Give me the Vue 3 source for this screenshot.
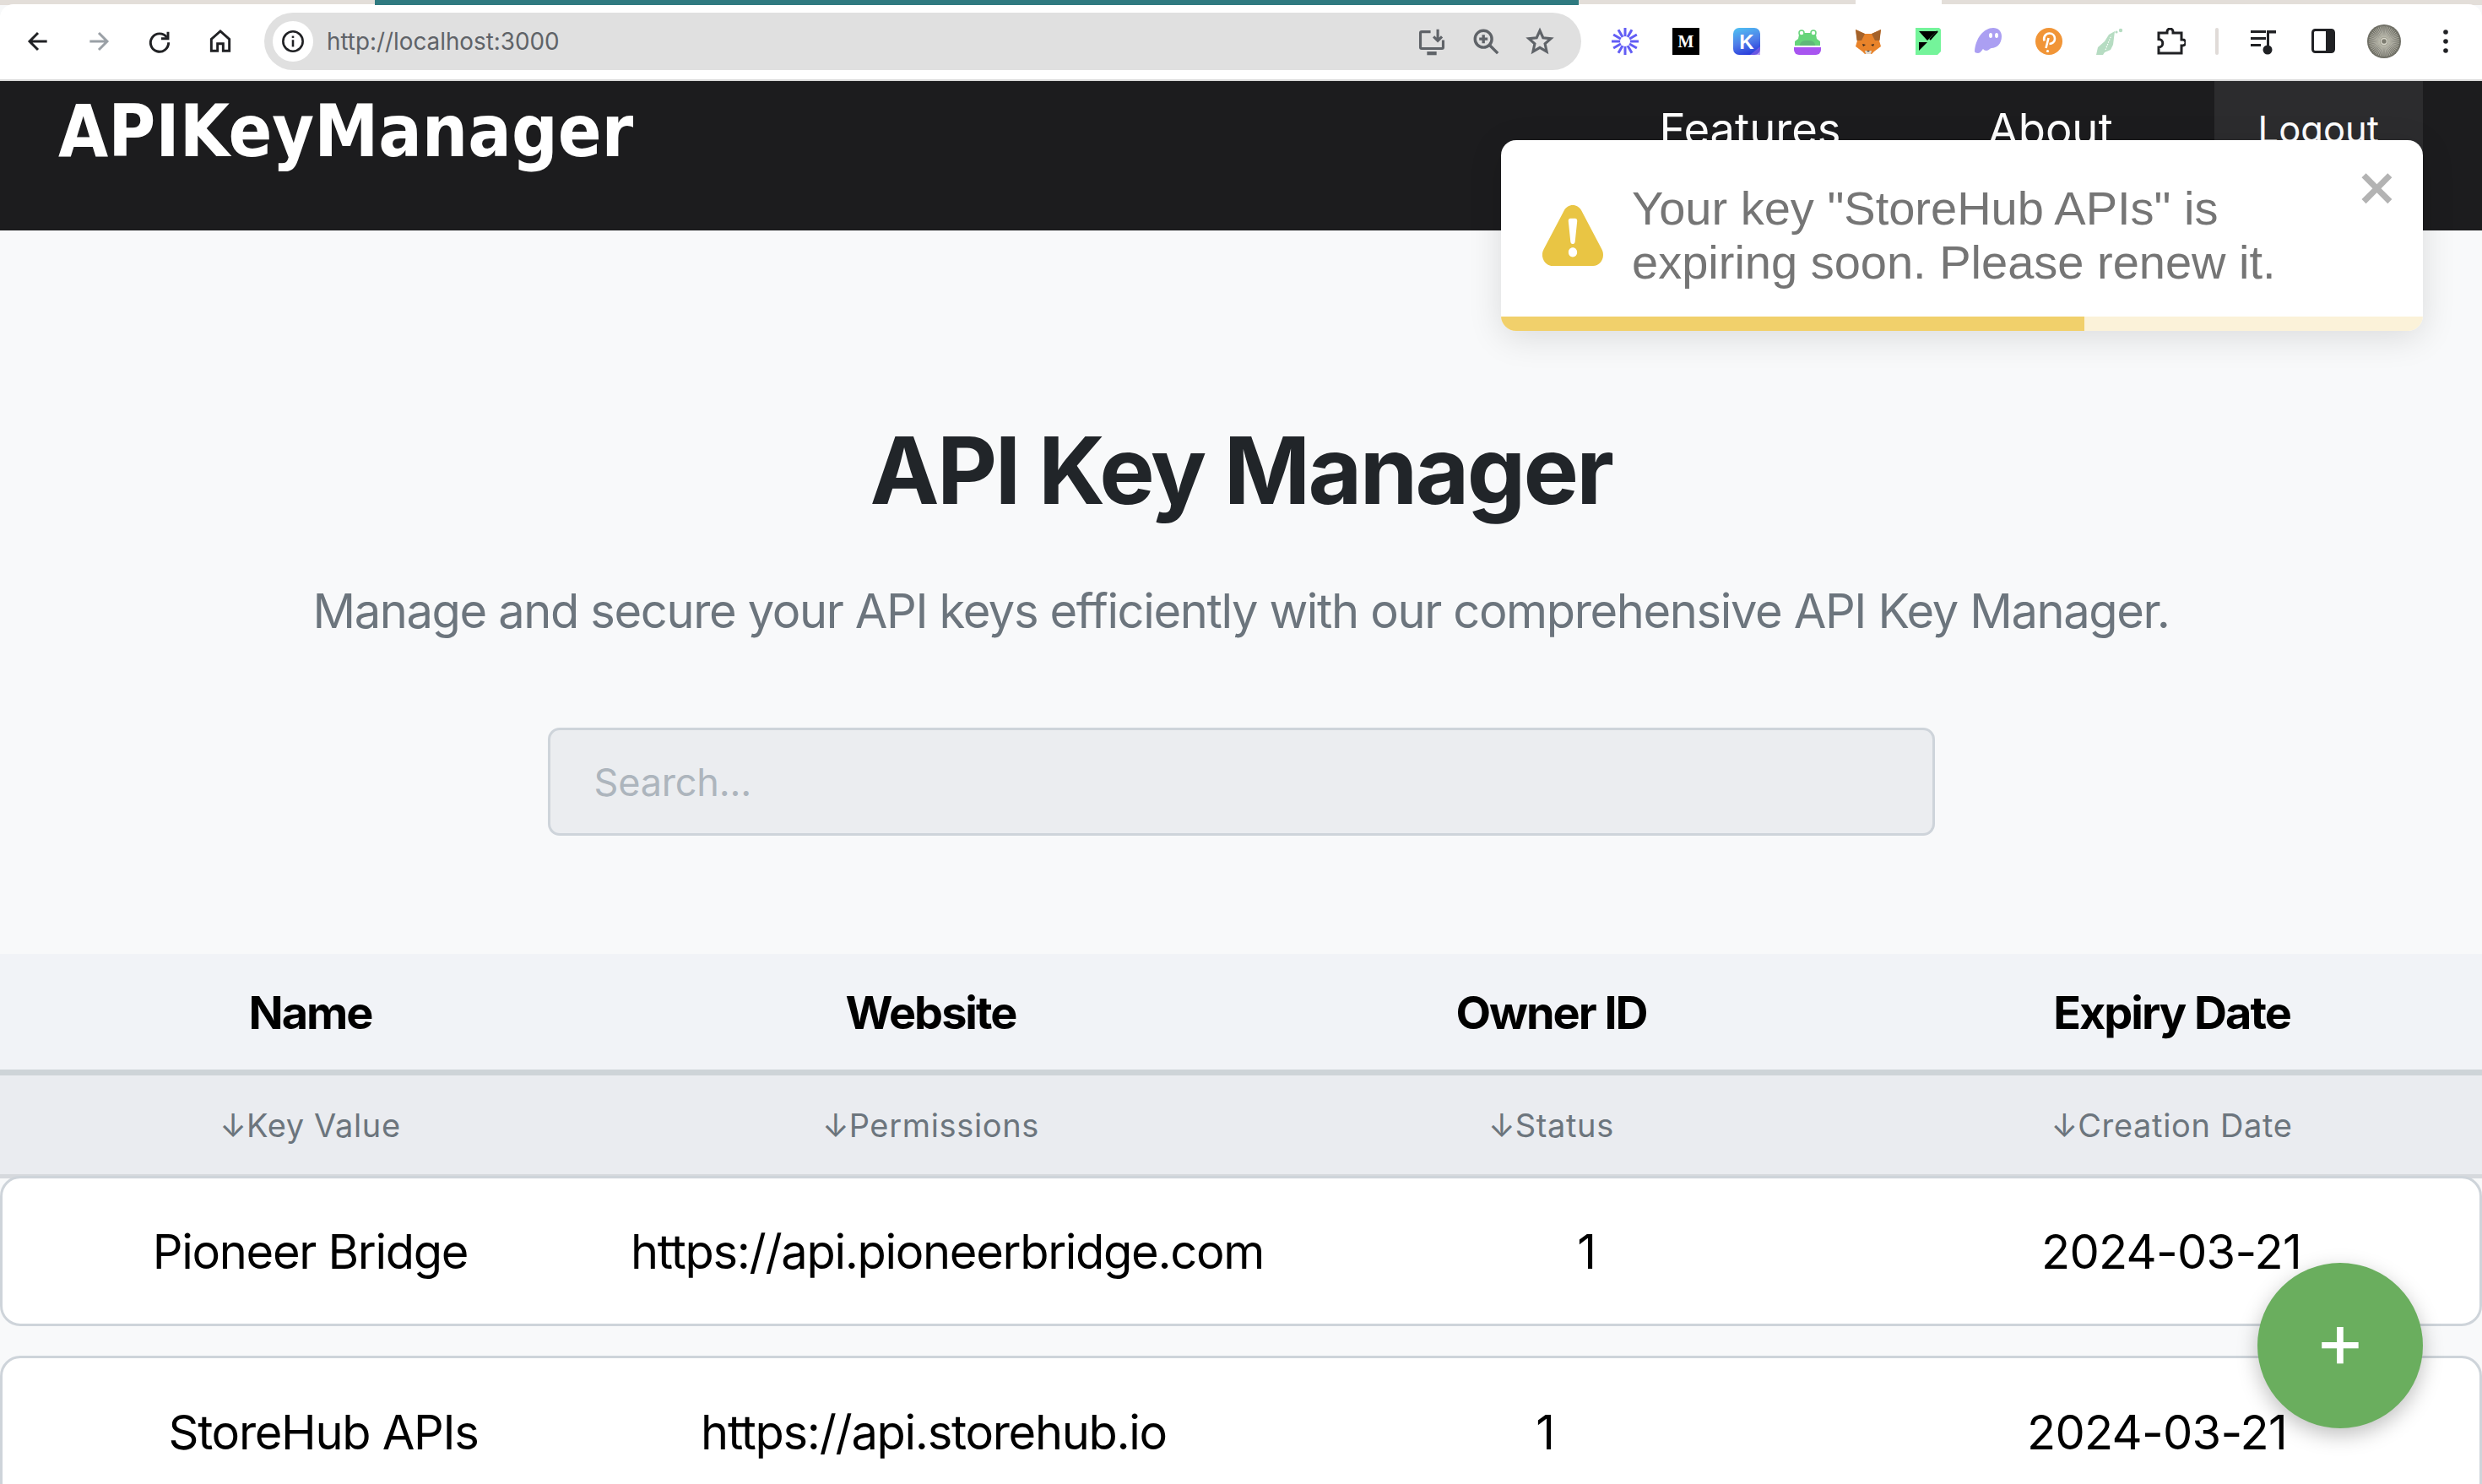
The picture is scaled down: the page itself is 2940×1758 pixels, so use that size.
<script setup>
const spokes = Array.from({ length: 6 }, (_, i) => i * 30)
const rays = Array.from({ length: 48 }, (_, i) => i * 7.5)
const columns = ['Name', 'Website', 'Owner ID', 'Expiry Date']
const subColumns = ['Key Value', 'Permissions', 'Status', 'Creation Date']
const rows = [
  { id: 'a', cells: ['Pioneer Bridge', 'https://api.pioneerbridge.com', '1', '2024-03-21'] },
  { id: 'b', cells: ['StoreHub APIs', 'https://api.storehub.io', '1', '2024-03-21'] }
]
</script>

<template>
  <div class="page">
    <div class="tabstrip">
      <div class="tab-gap"></div>
      <div class="tab-active"></div>
      <div class="tab-rest"></div>
      <div class="tab-notch"></div>
      <div class="tab-fill"></div>
    </div>

    <div class="toolbar">
      <div class="navbtns">
        <svg class="navicon" viewBox="0 0 24 24" fill="none" stroke="#202124" stroke-width="2.2"><path d="M20 12H5M12 4.5 4.5 12l7.5 7.5" /></svg>
        <svg class="navicon" viewBox="0 0 24 24" fill="none" stroke="#9aa0a6" stroke-width="2.2"><path d="M4 12h15M12 4.5l7.5 7.5-7.5 7.5" /></svg>
        <svg class="navicon" viewBox="0 0 24 24" fill="none" stroke="#202124" stroke-width="2.2"><path d="M18.5 8.5A8 8 0 1 0 20 13" /><path d="M19.5 3.5v6h-6" /></svg>
        <svg class="navicon" viewBox="0 0 24 24" fill="none" stroke="#202124" stroke-width="2.2"><path d="M4 20.5V10l8-7 8 7v10.5h-5.5V14h-5v6.5z" /></svg>
      </div>

      <div class="omnibox">
        <div class="chip">
          <svg class="info" viewBox="0 0 24 24" fill="none" stroke="#202124" stroke-width="2.2"><circle cx="12" cy="12" r="10" /><path d="M12 10.5v7" /><path d="M12 6.5v2" /></svg>
        </div>
        <span class="url">http://localhost:3000</span>
        <div class="omni-actions">
          <svg class="omni-icon" viewBox="0 0 24 24" fill="none" stroke="#5f6368" stroke-width="2.2"><path d="M11 4H3.500a1 1 0 0 0-1 1v12a1 1 0 0 0 1 1h17a1 1 0 0 0 1-1v-6" /><path d="M8 22h8" stroke-width="3" /><path d="M17 2v9M13.500 8l3.500 3.500L20.500 8" /></svg>
          <svg class="omni-icon" viewBox="0 0 24 24" fill="none" stroke="#5f6368" stroke-width="2.4"><circle cx="10" cy="10" r="7" /><path d="m15 15 7 7M10 6.500v7M6.500 10h7" /></svg>
          <svg class="omni-icon" viewBox="0 0 24 24" fill="none" stroke="#5f6368" stroke-width="2.2"><path d="m12 3 2.700 6 6.500.7-4.900 4.300 1.400 6.500L12 17.200 6.300 20.500l1.400-6.500L2.800 9.700l6.500-.7z" /></svg>
        </div>
      </div>

      <div class="extensions">
        <svg class="ext" viewBox="0 0 32 32">
          <g stroke="#625df5" stroke-width="3">
            <line v-for="a in spokes" :key="a" x1="16" y1="0" x2="16" y2="32" :transform="`rotate(${a} 16 16)`" />
          </g>
          <circle cx="16" cy="16" r="6" fill="#fff" />
        </svg>
        <svg class="ext" viewBox="0 0 32 32">
          <rect width="32" height="32" fill="#000" />
          <text x="16" y="23" text-anchor="middle" class="ext-m">M</text>
        </svg>
        <svg class="ext" viewBox="0 0 32 32">
          <defs>
            <linearGradient id="kgrad" x1="0.2" y1="0" x2="0.5" y2="1">
              <stop offset="0" stop-color="#4fbdf2" />
              <stop offset="0.55" stop-color="#4f7de8" />
              <stop offset="1" stop-color="#2b3fdc" />
            </linearGradient>
          </defs>
          <rect width="32" height="32" rx="7" fill="url(#kgrad)" />
          <path d="M20 32h12V22z" fill="#9268e8" opacity=".6" />
          <text x="16" y="25" text-anchor="middle" class="ext-k">K</text>
        </svg>
        <svg class="ext" viewBox="0 0 32 32">
          <path d="M1 21v-5l4-3 1-5a3.500 3.500 0 0 1 5-2h10a3.500 3.500 0 0 1 5 2l1 5 4 3v5z" fill="#66d47a" />
          <path d="M7 21c0-5 4-6 9-6s9 1 9 6z" fill="#5fb878" />
          <circle cx="9" cy="6" r="3" fill="#fff" stroke="#66d47a" stroke-width="1.500" />
          <circle cx="23" cy="6" r="3" fill="#fff" stroke="#66d47a" stroke-width="1.500" />
          <path d="M0 23h32v3a6 6 0 0 1-6 6H6a6 6 0 0 1-6-6z" fill="#a855f0" />
        </svg>
        <svg class="ext" viewBox="0 0 32 32">
          <path d="M1 2l11 5h8l11-5-2 13 2 7-8 6-3 3h-8l-3-3-8-6 2-7z" fill="#e8832a" />
          <path d="M1 2l11 5-4 8H2.500zM31 2l-11 5 4 8h5.500z" fill="#a4622a" />
          <path d="M12 27h8l-1 4h-6z" fill="#e0d8cc" />
          <path d="M14 27h4l-2 1.500z" fill="#3a3a3a" />
          <path d="M9 19l4 1-3 2zM23 19l-4 1 3 2z" fill="#3b2a1e" />
        </svg>
        <svg class="ext ext-narrow" viewBox="0 0 30 32">
          <path d="M0 0h28l2 2v26l-4 4H0z" fill="#74f49a" />
          <path d="M4 4h21l-11 11z" fill="#000" />
          <path d="M26 4 17 14" stroke="#000" stroke-width="2" />
          <path d="M4 27V17h10z" fill="#000" />
        </svg>
        <svg class="ext" viewBox="0 0 32 32">
          <path d="M0 28C1 12 11 0 22 0c6 0 10 4 10 10 0 9-6 14-12 14-2 0-3 3-6 3-2 0-3-1-4-2-2 2-3 5-6 5-2 0-4-1-4-2z" fill="#ab9ff2" />
          <ellipse cx="19" cy="9" rx="2" ry="3" fill="#fff" />
          <ellipse cx="26" cy="9" rx="2" ry="3" fill="#fff" />
        </svg>
        <svg class="ext" viewBox="0 0 32 32">
          <circle cx="16" cy="16" r="16" fill="#f19537" />
          <path d="M10.500 15.500C9 10.500 12.500 6.500 16.500 6.500S23 9.500 23 13s-3 6-6.500 6M15.500 12l-3 12" fill="none" stroke="#fff" stroke-width="2.600" />
          <circle cx="14.500" cy="27.500" r="1.600" fill="#fff" />
        </svg>
        <svg class="ext" viewBox="0 0 32 32">
          <g fill="#b6dcc2">
            <path d="M0 32l2-9 8-7 5-8 7-4-1 8-1 8-3 6-7 3-2 3z" />
            <circle cx="29" cy="3" r="2.200" />
            <circle cx="24" cy="5" r="1.600" />
          </g>
          <path d="M11 26l4-10 3-7" stroke="#fff" stroke-width="1.200" stroke-dasharray="1.500 1.500" fill="none" />
        </svg>
        <svg class="ext puzzle" viewBox="0 0 34 32" fill="none" stroke="#202124" stroke-width="3">
          <path d="M2 6h10V4.500a3.500 3.500 0 0 1 7 0V6h10v8h1.500a3.500 3.500 0 0 1 0 7H29v9H2v-7a4.500 4.500 0 0 0 0-9.500z" />
        </svg>
      </div>

      <div class="sep"></div>

      <div class="tools">
        <svg class="tool-music" viewBox="0 0 30 32">
          <g fill="#202124">
            <rect y="3" width="18" height="3" />
            <rect y="11" width="18" height="3" />
            <rect y="19" width="12" height="3" />
            <rect x="19" y="3" width="11" height="3.500" />
            <rect x="19" y="3" width="3" height="24" />
            <circle cx="20" cy="26" r="5.500" />
          </g>
        </svg>
        <svg class="tool-panel" viewBox="0 0 28 32">
          <rect x="1.500" y="2.500" width="25" height="26" rx="3" fill="#fff" stroke="#202124" stroke-width="3" />
          <rect x="17" y="2.500" width="10" height="26" fill="#202124" />
        </svg>
        <svg class="avatar" viewBox="0 0 40 40">
          <defs>
            <radialGradient id="avg" cx="0.5" cy="0.5" r="0.55">
              <stop offset="0" stop-color="#a8a798" />
              <stop offset="0.5" stop-color="#83827a" />
              <stop offset="1" stop-color="#68685e" />
            </radialGradient>
          </defs>
          <circle cx="20" cy="20" r="20" fill="url(#avg)" />
          <g stroke="#d3d2c4" stroke-width=".7" opacity=".75">
            <line v-for="a in rays" :key="a" x1="20" y1="15" x2="20" y2="2" :transform="`rotate(${a} 20 20)`" />
          </g>
          <circle cx="20" cy="20" r="3.500" fill="#7c7b70" stroke="#dad9cc" stroke-width="1.400" />
        </svg>
      </div>

      <svg class="dots" viewBox="0 0 6 28" fill="#202124">
        <circle cx="3" cy="3" r="2.800" />
        <circle cx="3" cy="14" r="2.800" />
        <circle cx="3" cy="25" r="2.800" />
      </svg>
    </div>

    <header class="navbar">
      <div class="brand">APIKeyManager</div>
      <nav class="links">
        <a class="link">Features</a>
        <a class="link">About</a>
        <a class="link link-active">Logout</a>
      </nav>
    </header>

    <section class="hero">
      <h1 class="title">API Key Manager</h1>
      <p class="subtitle">Manage and secure your API keys efficiently with our comprehensive API Key Manager.</p>
      <input class="search" type="text" placeholder="Search..." />
    </section>

    <div class="thead">
      <div v-for="c in columns" :key="c" class="th">{{ c }}</div>
    </div>
    <div class="subhead">
      <div v-for="c in subColumns" :key="c" class="sh"><span class="arrow">↓</span>{{ c }}</div>
    </div>

    <div v-for="r in rows" :key="r.id" class="card" :class="`card-${r.id}`">
      <div v-for="(cell, i) in r.cells" :key="i" class="cell" :class="{ 'cell-date': i === 3 }">{{ cell }}</div>
    </div>

    <div class="toast">
      <div class="toast-body">
        <svg class="warn" viewBox="0 0 24 24" fill="#e9c544"><path d="M23.32 17.191L15.438 2.184C14.728.833 13.416 0 11.996 0c-1.42 0-2.733.833-3.443 2.184L.533 17.448a4.744 4.744 0 000 4.368C1.243 23.167 2.555 24 3.975 24h16.05C22.22 24 24 22.044 24 19.632c0-.904-.251-1.746-.68-2.44zm-9.622 1.46c0 1.033-.724 1.823-1.698 1.823s-1.698-.79-1.698-1.822v-.043c0-1.028.724-1.822 1.698-1.822s1.698.79 1.698 1.822v.043zm.039-12.285l-.84 8.06c-.057.581-.408.943-.897.943-.49 0-.84-.367-.896-.942l-.84-8.065c-.057-.624.25-1.095.779-1.095h1.91c.528.005.84.476.784 1.1z" /></svg>
        <div class="toast-text">Your key "StoreHub APIs" is<br />expiring soon. Please renew it.</div>
        <svg class="toast-close" viewBox="0 0 14 16" fill="#b3b3b3"><path d="M7.71 8.23l-3.75 3.75-1.48-1.48 3.75-3.75L2.48 3 3.96 1.52l3.75 3.75L11.46 1.52 12.94 3 9.19 6.75l3.75 3.75-1.48 1.48z" /></svg>
      </div>
      <div class="progress"><div class="progress-fill"></div></div>
    </div>

    <button class="fab">+</button>
  </div>
</template>

<style>
html, body { margin: 0; padding: 0; background: #fff; }
</style>

<style scoped>
.page {
  position: relative;
  width: 2940px;
  height: 1758px;
  overflow: hidden;
  background: #f8f9fa;
  font-family: Inter, "Noto Sans", sans-serif;
}

.tabstrip { display: flex; height: 6px; background: #e3ded9; }
.tab-gap { width: 444px; }
.tab-active { width: 1426px; background: #2f7a80; }
.tab-rest { width: 328px; }
.tab-notch { width: 102px; background: #fff; }
.tab-fill { flex: 1; }

.toolbar {
  display: flex;
  align-items: center;
  height: 91px;
  background: #fff;
  border-top-left-radius: 16px;
  border-top-right-radius: 16px;
  margin-top: -1px;
  padding-bottom: 1px;
  box-sizing: border-box;
  border-bottom: 2px solid #d8d8d8;
}
.navbtns { display: flex; gap: 40px; padding-left: 29px; }
.navicon { width: 32px; height: 32px; display: block; }
.omnibox {
  display: flex;
  align-items: center;
  width: 1560px;
  height: 68px;
  margin-left: 36px;
  border-radius: 34px;
  background: #e0e0e0;
  box-sizing: border-box;
  padding-left: 10px;
  padding-right: 32px;
}
.chip {
  display: flex;
  align-items: center;
  justify-content: center;
  width: 48px;
  height: 48px;
  border-radius: 50%;
  background: #fff;
}
.info { width: 28px; height: 28px; }
.url {
  margin-left: 16px;
  font-family: Inter, sans-serif;
  font-size: 27.800px;
  color: #5f6368;
}
.omni-actions { display: flex; gap: 30px; margin-left: auto; }
.omni-icon { width: 34px; height: 34px; display: block; }

.extensions { display: flex; gap: 40px; margin-left: 36px; align-items: center; }
.ext { width: 32px; height: 32px; display: block; }
.ext-narrow { width: 30px; }
.puzzle { width: 34px; height: 32px; }
.ext-m { font: 700 20px "Liberation Serif", serif; fill: #fff; }
.ext-k { font: 700 24px "Liberation Sans", sans-serif; fill: #fff; }

.sep { width: 4px; height: 32px; margin-left: 35px; background: #e0dbd8; border-radius: 2px; }
.tools { display: flex; align-items: center; margin-left: 38px; gap: 42px; }
.tool-music { width: 30px; height: 32px; display: block; }
.tool-panel { width: 28px; height: 32px; display: block; }
.avatar { width: 40px; height: 40px; display: block; margin-left: -4px; }
.dots { width: 6px; height: 28px; margin-left: 50px; }

.navbar {
  display: flex;
  justify-content: space-between;
  align-items: flex-start;
  height: 177px;
  background: #1c1c1e;
  padding: 0 70px 0 69px;
  box-sizing: border-box;
}
.brand {
  font-family: "DejaVu Sans Condensed", "DejaVu Sans", sans-serif;
  font-stretch: condensed;
  font-weight: 700;
  font-size: 85px;
  line-height: 100px;
  color: #fff;
  margin-top: 10px;
}
.links { display: flex; gap: 66px; }
.link {
  padding: 21px 54px 0;
  height: 130px;
  box-sizing: border-box;
  font-size: 52.500px;
  line-height: 72px;
  color: #fff;
  border-radius: 0 0 16px 16px;
}
.link-active {
  padding-left: 52px;
  padding-right: 52px;
  background: #2c2c2e;
  font-size: 43.500px;
}

.hero {
  display: flex;
  flex-direction: column;
  align-items: center;
  height: 857px;
  box-sizing: border-box;
  padding-top: 224px;
}
.title {
  margin: 0;
  font-size: 110px;
  line-height: 120px;
  font-weight: 700;
  letter-spacing: -2.700px;
  color: #212529;
}
.subtitle {
  margin: 72px 0 0;
  font-size: 56px;
  line-height: 70px;
  letter-spacing: -1.360px;
  color: #6c757d;
}
.search {
  display: block;
  width: 1643px;
  height: 128px;
  margin-top: 103px;
  box-sizing: border-box;
  padding: 0 52px;
  border: 3px solid #ced4da;
  border-radius: 14px;
  background: #ebedf0;
  font-family: Inter, sans-serif;
  font-size: 45px;
  letter-spacing: -0.200px;
  outline: none;
}
.search::placeholder { color: #adb5bd; opacity: 1; }

.thead {
  display: grid;
  grid-template-columns: repeat(4, 1fr);
  align-items: center;
  height: 144px;
  box-sizing: border-box;
  background: #f1f3f7;
  border-bottom: 7px solid #ced4d8;
  padding-top: 2px;
}
.th {
  text-align: center;
  font-size: 54px;
  font-weight: 700;
  letter-spacing: -2px;
  color: #000;
}
.subhead {
  display: grid;
  grid-template-columns: repeat(4, 1fr);
  align-items: center;
  height: 122px;
  box-sizing: border-box;
  background: #eaecf0;
  border-bottom: 5px solid #d6d9dd;
}
.sh {
  text-align: center;
  font-size: 38px;
  letter-spacing: 0.650px;
  color: #6c757d;
}
.arrow { letter-spacing: 0; }

.card {
  display: grid;
  align-items: center;
  box-sizing: border-box;
  background: #fff;
  border: 3px solid #ced4da;
  border-radius: 24px;
  font-size: 56px;
  letter-spacing: -1.300px;
  color: #000;
  text-align: center;
}
.cell-date { letter-spacing: -0.750px; }
.card-a {
  height: 178px;
  margin-top: -3px;
  padding-top: 2px;
  grid-template-columns: 729px 780px 734px 652px;
}
.card-b {
  height: 182px;
  margin-top: 35px;
  grid-template-columns: 760px 686px 762px 688px;
}

.toast {
  position: absolute;
  left: 1778px;
  top: 166px;
  width: 1092px;
  height: 226px;
  display: flex;
  flex-direction: column;
  overflow: hidden;
  background: #fff;
  border-radius: 18px;
  box-shadow: 0 8px 40px rgba(0, 0, 0, 0.12);
}
.toast-body {
  position: relative;
  flex: 1;
  display: flex;
  align-items: center;
  padding: 17px 0 0 49px;
}
.warn { width: 72px; height: 72px; flex: none; }
.toast-text {
  margin-left: 34px;
  font-family: "Liberation Sans", Arial, sans-serif;
  font-size: 56px;
  line-height: 64px;
  color: #757575;
}
.toast-close {
  position: absolute;
  top: 34px;
  right: 33px;
  width: 48px;
  height: 55px;
}
.progress { height: 17px; background: #fbf2d9; }
.progress-fill { width: 691px; height: 100%; background: #f1d06b; }

.fab {
  position: absolute;
  left: 2674px;
  top: 1496px;
  width: 196px;
  height: 196px;
  padding: 0 0 14px;
  border: none;
  border-radius: 50%;
  background: #6aae5e;
  color: #fff;
  font-family: Inter, sans-serif;
  font-size: 92px;
  line-height: 1;
  box-shadow: 0 8px 24px rgba(0, 0, 0, 0.25);
}
</style>
